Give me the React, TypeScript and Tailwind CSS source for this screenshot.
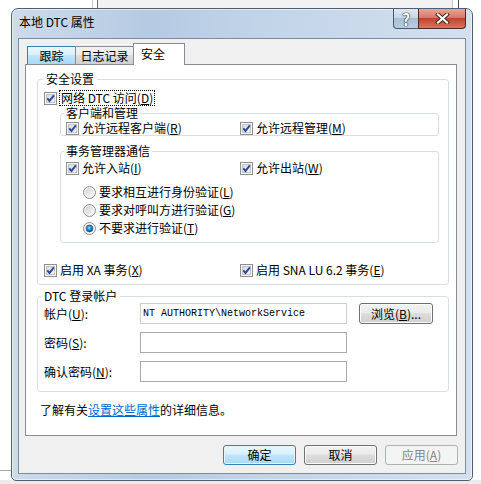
import React from 'react'

function Mn({ c }: { c: string }) {
  return (
    <>
      (<span className="underline underline-offset-1">{c}</span>)
    </>
  )
}

function CheckBox() {
  return (
    <svg width="13" height="13" viewBox="0 0 13 13" className="shrink-0">
      <defs>
        <linearGradient id="cbIn" x1="0" y1="0" x2="1" y2="1">
          <stop offset="0" stopColor="#d6d7d8" />
          <stop offset="1" stopColor="#f8f8f8" />
        </linearGradient>
      </defs>
      <rect x="0.5" y="0.5" width="12" height="12" fill="#f6f6f6" stroke="#8e8f8f" />
      <rect x="2.5" y="2.5" width="8" height="8" fill="url(#cbIn)" stroke="#c3c4c5" />
      <path d="M3.3 6.3 L5.5 8.9 L9.9 3.3" fill="none" stroke="#2a469c" strokeWidth="1.9" />
    </svg>
  )
}

function Radio({ on = false }: { on?: boolean }) {
  return (
    <svg width="13" height="13" viewBox="0 0 13 13" className="shrink-0">
      <defs>
        <linearGradient id="rbIn" x1="0" y1="0" x2="1" y2="1">
          <stop offset="0" stopColor="#cfd0d1" />
          <stop offset="1" stopColor="#fbfbfb" />
        </linearGradient>
        <radialGradient id="rbDot" cx="0.45" cy="0.4" r="0.6">
          <stop offset="0" stopColor="#9fe3fb" />
          <stop offset="0.45" stopColor="#2b93d6" />
          <stop offset="1" stopColor="#0b4f8c" />
        </radialGradient>
      </defs>
      <circle cx="6.5" cy="6.5" r="6" fill="#f4f4f4" stroke="#8e8f8f" />
      <circle cx="6.5" cy="6.5" r="4.3" fill="url(#rbIn)" />
      {on && <circle cx="6.5" cy="6.5" r="3.4" fill="url(#rbDot)" stroke="#164e86" strokeWidth="0.6" />}
    </svg>
  )
}

function Check({ children }: { children: React.ReactNode }) {
  return (
    <div className="flex items-center gap-[3px] h-[14px]">
      <CheckBox />
      <span className="leading-[14px] whitespace-nowrap">{children}</span>
    </div>
  )
}

function RadioRow({ on, children }: { on?: boolean; children: React.ReactNode }) {
  return (
    <div className="flex items-center gap-[3px] h-[18px]">
      <Radio on={on} />
      <span className="leading-[14px] whitespace-nowrap">{children}</span>
    </div>
  )
}

function Button({ kind = 'normal', className = '', children }: { kind?: 'normal' | 'default' | 'disabled'; className?: string; children: React.ReactNode }) {
  const styles = {
    normal:
      'border-[#707070] bg-[linear-gradient(#f2f2f2,#ebebeb_45%,#dddddd_50%,#cfcfcf)] shadow-[inset_0_0_0_1px_#fbfbfb]',
    default:
      'border-[#3c7fb1] bg-[linear-gradient(#eaf6fd,#d9f0fc_45%,#bee6fd_50%,#a7d9f5)] shadow-[inset_0_0_0_1px_#e4f5fd]',
    disabled: 'border-[#adb2b5] bg-[#f4f4f4] text-[#838383]',
  }
  return (
    <div className={`flex items-center justify-center h-[20px] rounded-[3px] border leading-[14px] ${styles[kind]} ${className}`}>
      {children}
    </div>
  )
}

export default function App() {
  return (
    <div className="relative w-[481px] h-[484px] overflow-hidden bg-white font-['Noto_Sans_CJK_SC',sans-serif] text-[12px] text-black">
      {/* desktop behind the dialog */}
      <div className="absolute left-[98px] top-0 w-[354px] h-[10px] bg-[#f2f2f2]" />
      <div className="absolute left-[92px] top-0 w-px h-[12px] bg-[#c9c9c9]" />
      <div className="absolute left-[97px] top-0 w-px h-[12px] bg-[#707070]" />
      <div className="absolute left-[452px] top-0 w-px h-full bg-[#c9c9c9]" />
      <div className="absolute left-[458px] top-0 w-px h-full bg-[#474747]" />
      <div className="absolute left-0 top-[470px] w-[12px] h-px bg-[#a8a8a8]" />
      <div className="absolute left-0 bottom-0 w-full h-[4px] bg-[#ececec]" />

      {/* dialog window */}
      <div className="absolute left-[11px] top-[8px] w-[462px] h-[473px] flex flex-col rounded-t-[7px] rounded-b-[5px] border border-[#4f5e70] bg-[linear-gradient(to_right,#cddbea,#b5cae3_30%,#c2d4e8_55%,#d4e0ee)] shadow-[inset_0_0_0_1px_rgba(255,255,255,0.55)]">
        {/* title bar */}
        <div className="flex items-start h-[29px] shrink-0">
          <div className="ml-[7px] mt-[5px] leading-[16px] whitespace-nowrap">本地 DTC 属性</div>
          <div className="ml-auto mr-[6px] flex">
            <div className="w-[26px] h-[20px] flex items-center justify-center rounded-bl-[4px] border border-t-0 border-[#4a5a6e] bg-[linear-gradient(#dfe8f2,#c7d6e6_45%,#a9bed5_50%,#b9cde2)] text-white font-bold text-[16px] leading-none [text-shadow:0_0_1px_#222,0_0_1px_#222,0_0_1px_#222]">
              ?
            </div>
            <div className="w-[48px] h-[20px] -ml-px flex items-center justify-center rounded-br-[4px] border border-t-0 border-[#4a2a24] bg-[linear-gradient(#e8a597,#d57a69_45%,#c2432d_50%,#d7775f)]">
              <svg width="15" height="11" viewBox="0 0 15 11">
                <path d="M3 1.5 L12 9.5 M12 1.5 L3 9.5" stroke="#3a2320" strokeWidth="4" strokeLinecap="square" />
                <path d="M3 1.5 L12 9.5 M12 1.5 L3 9.5" stroke="#ffffff" strokeWidth="2.2" strokeLinecap="square" />
              </svg>
            </div>
          </div>
        </div>

        {/* client area */}
        <div className="flex-1 mx-[6px] mb-[6px] border border-[#7b8ca0] bg-[#f0f0f0] flex flex-col">
          <div className="pt-[4px] pl-[6px]">
            {/* tabs */}
            <div className="flex items-end h-[21px] pl-[2px] relative z-10">
              <div className="w-[49px] h-[18px] flex justify-center pt-[1px] border border-b-0 border-[#3c7fb1] bg-[linear-gradient(#eaf6fd,#d9f0fc_45%,#bee6fd_50%,#a7d9f5)] leading-[16px]">
                跟踪
              </div>
              <div className="w-[59px] h-[18px] -ml-px flex justify-center pt-[1px] border border-b-0 border-[#898c95] bg-[linear-gradient(#f2f2f2,#ebebeb_45%,#dddddd_50%,#cfcfcf)] leading-[16px]">
                日志记录
              </div>
              <div className="w-[52px] h-[22px] -ml-px -mb-px pl-[7px] pt-[2px] border border-b-0 border-[#898c95] bg-white leading-[16px]">
                安全
              </div>
            </div>

            {/* tab page */}
            <div className="w-[432px] h-[372px] border border-[#898c95] bg-white flex flex-col">
              <fieldset className="ml-[11px] mt-[7px] w-[412px] pb-[7px] rounded-[3px] border border-[#d5dfe5]">
                <legend className="ml-[5px] px-[3px] leading-[14px]">安全设置</legend>
                <div className="mt-[4px] pl-[6px] h-[16px] flex items-center gap-[2px]">
                  <CheckBox />
                  <span className="h-[16px] px-px border border-dotted border-black leading-[14px] whitespace-nowrap">
                    网络 DTC 访问<Mn c="D" />
                  </span>
                </div>

                <fieldset className="ml-[22px] mt-0 w-[379px] rounded-[3px] border border-[#d5dfe5]">
                  <legend className="ml-[3px] px-[2px] leading-[14px]">客户端和管理</legend>
                  <div className="mt-px pl-[5px] grid grid-cols-[174px_1fr]">
                    <Check>
                      允许远程客户端<Mn c="R" />
                    </Check>
                    <Check>
                      允许远程管理<Mn c="M" />
                    </Check>
                  </div>
                </fieldset>

                <fieldset className="ml-[22px] mt-[8px] w-[379px] pb-[5px] rounded-[3px] border border-[#d5dfe5]">
                  <legend className="ml-[3px] px-[2px] leading-[14px]">事务管理器通信</legend>
                  <div className="mt-[3px] pl-[5px] grid grid-cols-[174px_1fr]">
                    <Check>
                      允许入站<Mn c="I" />
                    </Check>
                    <Check>
                      允许出站<Mn c="W" />
                    </Check>
                  </div>
                  <div className="mt-[8px] pl-[22px] flex flex-col">
                    <RadioRow>
                      要求相互进行身份验证<Mn c="L" />
                    </RadioRow>
                    <RadioRow>
                      要求对呼叫方进行验证<Mn c="G" />
                    </RadioRow>
                    <RadioRow on>
                      不要求进行验证<Mn c="T" />
                    </RadioRow>
                  </div>
                </fieldset>

                <div className="mt-[20px] pl-[6px] grid grid-cols-[196px_1fr]">
                  <Check>
                    启用 XA 事务<Mn c="X" />
                  </Check>
                  <Check>
                    启用 SNA LU 6.2 事务<Mn c="E" />
                  </Check>
                </div>
              </fieldset>

              <fieldset className="ml-[11px] mt-[4px] w-[412px] pb-[9px] rounded-[3px] border border-[#d5dfe5]">
                <legend className="ml-[3px] px-[3px] leading-[14px]">DTC 登录帐户</legend>
                <div className="pl-[6px] flex flex-col gap-[8px]">
                  <div className="flex items-center h-[21px]">
                    <span className="w-[96px] leading-[14px]">
                      帐户<Mn c="U" />:
                    </span>
                    <div className="w-[207px] h-[21px] flex items-center pl-[2px] border border-[#c9cdd3] bg-white font-['Liberation_Mono',monospace] text-[10px] whitespace-nowrap">
                      NT AUTHORITY\NetworkService
                    </div>
                    <Button className="ml-[12px] w-[74px] h-[21px]">
                      浏览<Mn c="B" />...
                    </Button>
                  </div>
                  <div className="flex items-center h-[21px]">
                    <span className="w-[96px] leading-[14px]">
                      密码<Mn c="S" />:
                    </span>
                    <div className="w-[207px] h-[21px] border border-[#a9a9a9] bg-white" />
                  </div>
                  <div className="flex items-center h-[21px]">
                    <span className="w-[96px] leading-[14px]">
                      确认密码<Mn c="N" />:
                    </span>
                    <div className="w-[207px] h-[21px] border border-[#a9a9a9] bg-white" />
                  </div>
                </div>
              </fieldset>

              <p className="mt-[10px] pl-[14px] leading-[16px] whitespace-nowrap">
                了解有关<span className="text-[#0066cc] underline">设置这些属性</span>的详细信息。
              </p>
            </div>
          </div>

          {/* dialog buttons */}
          <div className="mt-[9px] pr-[7px] flex justify-end gap-[8px]">
            <Button kind="default" className="w-[73px]">
              确定
            </Button>
            <Button className="w-[73px]">取消</Button>
            <Button kind="disabled" className="w-[73px]">
              应用<Mn c="A" />
            </Button>
          </div>
        </div>
      </div>
    </div>
  )
}
